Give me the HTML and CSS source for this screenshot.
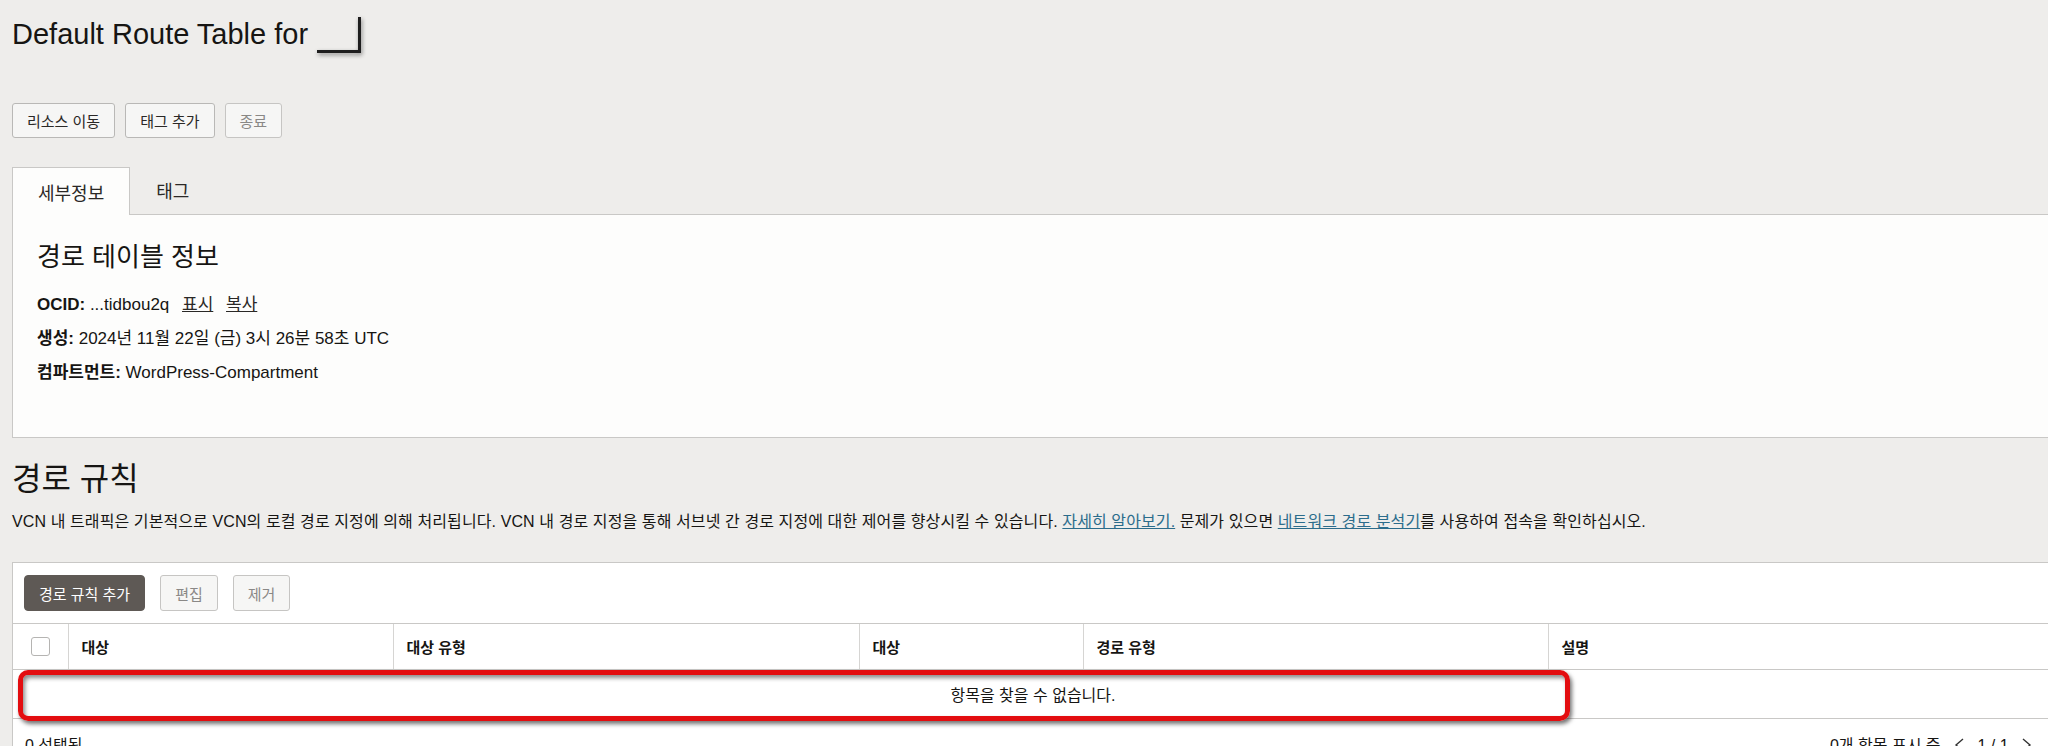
FILE: index.html
```html
<!DOCTYPE html>
<html lang="ko">
<head>
    <meta charset="UTF-8">
    <title>Default Route Table</title>
    <link rel="stylesheet" href="styles.css">
</head>
<body>
<div class="page">
    <h1 class="title">Default Route Table for <span class="redacted"></span></h1>

    <div class="actions">
        <button class="btn">리소스 이동</button>
        <button class="btn">태그 추가</button>
        <button class="btn btn-muted">종료</button>
    </div>

    <div class="tabs">
        <div class="tab active">세부정보</div>
        <div class="tab">태그</div>
    </div>
    <div class="panel">
        <h2>경로 테이블 정보</h2>
        <div class="info"><b>OCID:</b> ...tidbou2q <a href="#">표시</a> <a href="#">복사</a></div>
        <div class="info"><b>생성:</b> 2024년 11월 22일 (금) 3시 26분 58초 UTC</div>
        <div class="info"><b>컴파트먼트:</b> WordPress-Compartment</div>
    </div>

    <h2 class="section-title">경로 규칙</h2>
    <p class="desc">VCN 내 트래픽은 기본적으로 VCN의 로컬 경로 지정에 의해 처리됩니다. VCN 내 경로 지정을 통해 서브넷 간 경로 지정에 대한 제어를 향상시킬 수 있습니다. <a href="#">자세히 알아보기.</a> 문제가 있으면 <a href="#">네트워크 경로 분석기</a>를 사용하여 접속을 확인하십시오.</p>

    <div class="card">
        <div class="toolbar">
            <button class="btn btn-primary">경로 규칙 추가</button>
            <button class="btn btn-muted">편집</button>
            <button class="btn btn-muted">제거</button>
        </div>
        <table class="rules">
            <thead>
                <tr>
                    <th class="col-check"><span class="checkbox"></span></th>
                    <th class="col-dest">대상</th>
                    <th class="col-type">대상 유형</th>
                    <th class="col-target">대상</th>
                    <th class="col-route">경로 유형</th>
                    <th>설명</th>
                </tr>
            </thead>
            <tbody>
                <tr class="empty">
                    <td colspan="6">항목을 찾을 수 없습니다.</td>
                </tr>
            </tbody>
        </table>
        <div class="card-footer">
            <span>0 선택됨</span>
            <span class="pager">0개 항목 표시 중
                <svg width="12" height="16" viewBox="0 0 12 16"><polyline points="10,2 3,8 10,14" fill="none" stroke="#333" stroke-width="1.4"/></svg>
                1 / 1
                <svg width="12" height="16" viewBox="0 0 12 16"><polyline points="2,2 9,8 2,14" fill="none" stroke="#333" stroke-width="1.4"/></svg>
            </span>
        </div>
        <div class="highlight"></div>
    </div>
</div>
</body>
</html>
```

FILE: styles.css
```css
html, body {
    margin: 0;
    padding: 0;
    overflow: hidden;
}
body {
    background-color: #eeedeb;
    color: #161513;
    font-family: "Liberation Sans", "Noto Sans CJK KR", sans-serif;
    font-feature-settings: "palt";
}
.page {
    width: 2042px;
    padding: 17px 0 0 12px;
}
.title {
    font-size: 29px;
    font-weight: normal;
    line-height: 35px;
    margin: 0;
}
.redacted {
    display: inline-block;
    width: 41px;
    height: 33px;
    margin-left: 1px;
    vertical-align: top;
    border-right: 3px solid #1e1e1e;
    border-bottom: 3px solid #1e1e1e;
    filter: drop-shadow(1px 2px 2px rgba(0, 0, 0, 0.45));
}
.actions {
    display: flex;
    gap: 10px;
    margin-top: 50px;
}
.btn {
    height: 35px;
    padding: 0 14px;
    border: 1px solid #b9b8b6;
    border-radius: 3px;
    background-color: #f6f6f5;
    color: #2a2826;
    font-family: inherit;
    font-size: 15px;
    font-feature-settings: "palt";
}
.btn-muted {
    color: #8a8886;
    border-color: #c6c5c3;
}
.btn-primary {
    background-color: #5e5955;
    border-color: #5e5955;
    color: #fff;
    border-radius: 4px;
}
.tabs {
    display: flex;
    margin-top: 29px;
    border-bottom: 1px solid #c9c8c6;
}
.tab {
    height: 46px;
    padding: 0 26px;
    display: flex;
    align-items: center;
    font-size: 18px;
    color: #2a2826;
}
.tab.active {
    height: 47px;
    padding: 0 25px;
    margin-bottom: -1px;
    background-color: #fdfdfc;
    border: 1px solid #c9c8c6;
    border-bottom: none;
}
.panel {
    background-color: #fdfdfc;
    border: 1px solid #c9c8c6;
    border-top: none;
    padding: 26px 24px 47px;
}
.panel h2 {
    font-size: 26px;
    font-weight: normal;
    line-height: 32px;
    margin: 0 0 15px;
}
.info {
    font-size: 17px;
    line-height: 34px;
}
.info a {
    color: #2a2826;
    margin-left: 8px;
}
.section-title {
    font-size: 32px;
    font-weight: normal;
    line-height: 40px;
    margin: 21px 0 0;
}
.desc {
    font-size: 16px;
    line-height: 24px;
    letter-spacing: 0.1px;
    margin: 11px 0 0;
}
.desc a {
    color: #2b6c8b;
}
.card {
    position: relative;
    margin-top: 28px;
    background-color: #fff;
    border: 1px solid #c9c8c6;
}
.toolbar {
    display: flex;
    gap: 15px;
    padding: 12px 11px;
}
.toolbar .btn {
    height: 36px;
}
.rules {
    width: 100%;
    border-collapse: collapse;
    table-layout: fixed;
}
.rules th {
    box-sizing: border-box;
    height: 46px;
    padding: 0 13px;
    text-align: left;
    font-size: 15px;
    font-weight: bold;
    border-top: 1px solid #c9c8c6;
    border-bottom: 1px solid #c9c8c6;
    border-left: 1px solid #d6d5d3;
}
.rules th.col-check {
    border-left: none;
    padding: 0;
    text-align: center;
}
.col-check { width: 55px; }
.col-dest { width: 325px; }
.col-type { width: 466px; }
.col-target { width: 224px; }
.col-route { width: 465px; }
.checkbox {
    display: inline-block;
    width: 17px;
    height: 17px;
    vertical-align: middle;
    border: 1px solid #b5b4b2;
    border-radius: 3px;
    background-color: #fff;
}
.empty td {
    height: 46px;
    text-align: center;
    font-size: 16px;
    border-bottom: 1px solid #c9c8c6;
}
.card-footer {
    display: flex;
    justify-content: space-between;
    padding: 13px 12px;
    font-size: 16px;
}
.pager svg {
    vertical-align: -2px;
    margin: 0 8px;
}
.highlight {
    position: absolute;
    left: 5px;
    top: 107px;
    width: 1552px;
    height: 51px;
    box-sizing: border-box;
    border: 5px solid #e30d10;
    border-radius: 10px;
    box-shadow: 2px 3px 4px rgba(0, 0, 0, 0.55), inset 2px 3px 4px rgba(0, 0, 0, 0.45);
}
```
